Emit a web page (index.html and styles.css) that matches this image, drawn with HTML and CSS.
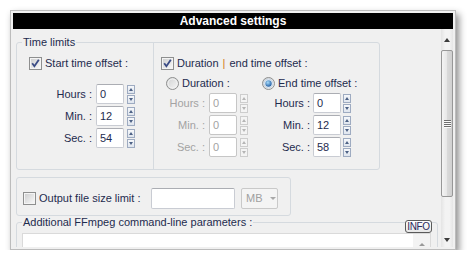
FILE: index.html
```html
<!DOCTYPE html>
<html lang="en">
<head>
    <meta charset="UTF-8">
    <title>Advanced settings</title>
    <link rel="stylesheet" href="styles.css">
</head>
<body>

    <svg class="defs" width="0" height="0">
        <defs>
            <linearGradient id="cbg" x1="0" y1="0" x2="1" y2="1">
                <stop offset="0" stop-color="#cfd0d1"/>
                <stop offset="1" stop-color="#f7f7f7"/>
            </linearGradient>
            <radialGradient id="rdot" cx="0.4" cy="0.35" r="0.7">
                <stop offset="0" stop-color="#a8dcfb"/>
                <stop offset="1" stop-color="#1a58a0"/>
            </radialGradient>
        </defs>
    </svg>

    <div class="window">
        <div class="titlebar">Advanced settings</div>
        <div class="body">
            <div class="main">

                <fieldset class="group time-group">
                    <legend>Time limits</legend>
                    <div class="time-cols">
                        <div class="start-col">
                            <label class="check">
                                <svg class="cb" viewBox="0 0 13 13"><rect x=".5" y=".5" width="12" height="12" fill="#f4f4f4" stroke="#8e8f8f"/><rect x="2" y="2" width="9" height="9" fill="url(#cbg)"/><path d="M3.2 6.3l2.2 3 4.4-6.6" fill="none" stroke="#3a4b85" stroke-width="1.8"/></svg>
                                Start time offset :
                            </label>
                            <div class="fields start-fields">
                                <div class="field"><span class="lbl">Hours :</span><span class="num">0</span><span class="spin"><i class="up"></i><i class="down"></i></span></div>
                                <div class="field"><span class="lbl">Min. :</span><span class="num">12</span><span class="spin"><i class="up"></i><i class="down"></i></span></div>
                                <div class="field"><span class="lbl">Sec. :</span><span class="num">54</span><span class="spin"><i class="up"></i><i class="down"></i></span></div>
                            </div>
                        </div>

                        <div class="end-col">
                            <label class="check">
                                <svg class="cb" viewBox="0 0 13 13"><rect x=".5" y=".5" width="12" height="12" fill="#f4f4f4" stroke="#8e8f8f"/><rect x="2" y="2" width="9" height="9" fill="url(#cbg)"/><path d="M3.2 6.3l2.2 3 4.4-6.6" fill="none" stroke="#3a4b85" stroke-width="1.8"/></svg>
                                Duration <span class="bar">|</span> end time offset :
                            </label>
                            <div class="sub-cols">
                                <div class="sub dur-sub">
                                    <label class="radio">
                                        <svg class="rb" viewBox="0 0 13 13"><circle cx="6.5" cy="6.5" r="6" fill="url(#cbg)" stroke="#8e8f8f"/><circle cx="6.5" cy="6.5" r="4.5" fill="none" stroke="#f2f2f2"/></svg>
                                        Duration :
                                    </label>
                                    <div class="fields">
                                        <div class="field off"><span class="lbl">Hours :</span><span class="num">0</span><span class="spin"><i class="up"></i><i class="down"></i></span></div>
                                        <div class="field off"><span class="lbl">Min. :</span><span class="num">0</span><span class="spin"><i class="up"></i><i class="down"></i></span></div>
                                        <div class="field off"><span class="lbl">Sec. :</span><span class="num">0</span><span class="spin"><i class="up"></i><i class="down"></i></span></div>
                                    </div>
                                </div>
                                <div class="sub offset-sub">
                                    <label class="radio">
                                        <svg class="rb" viewBox="0 0 13 13"><circle cx="6.5" cy="6.5" r="6" fill="url(#cbg)" stroke="#8e8f8f"/><circle cx="6.5" cy="6.5" r="4.5" fill="#eef3f8" stroke="#c4d3e3"/><circle cx="6.5" cy="6.5" r="3.2" fill="url(#rdot)"/></svg>
                                        End time offset :
                                    </label>
                                    <div class="fields">
                                        <div class="field"><span class="lbl">Hours :</span><span class="num">0</span><span class="spin"><i class="up"></i><i class="down"></i></span></div>
                                        <div class="field"><span class="lbl">Min. :</span><span class="num">12</span><span class="spin"><i class="up"></i><i class="down"></i></span></div>
                                        <div class="field"><span class="lbl">Sec. :</span><span class="num">58</span><span class="spin"><i class="up"></i><i class="down"></i></span></div>
                                    </div>
                                </div>
                            </div>
                        </div>
                    </div>
                </fieldset>

                <fieldset class="group size-group">
                    <label class="check size-check">
                        <svg class="cb" viewBox="0 0 13 13"><rect x=".5" y=".5" width="12" height="12" fill="#f4f4f4" stroke="#8e8f8f"/><rect x="2" y="2" width="9" height="9" fill="url(#cbg)"/></svg>
                        Output file size limit :
                    </label>
                    <span class="text-input"></span>
                    <span class="select">MB<i></i></span>
                </fieldset>

                <fieldset class="group params-group">
                    <legend>Additional FFmpeg command-line parameters :</legend>
                    <div class="params">
                        <span class="info-btn">INFO</span>
                        <div class="textarea"><div class="ta-scroll"><i></i></div></div>
                    </div>
                </fieldset>

            </div>
            <div class="scrollbar">
                <div class="sb-btn sb-up"><i></i></div>
                <div class="sb-thumb"><span class="grip"></span></div>
                <div class="sb-track"></div>
                <div class="sb-btn sb-down"><i></i></div>
            </div>
        </div>
    </div>

</body>
</html>
```

FILE: styles.css
```css
* { box-sizing: border-box; }
body { margin: 0; background: #fff; font-family: "Liberation Sans", Arial, sans-serif; font-size: 11px; color: #1e2b4e; }
.defs { position: absolute; }

.window {
    margin: 10px 0 0 10px; width: 446px; height: 240px;
    border: 1px solid #bcbcbc; padding: 2px;
    background: #f0f0f0;
    box-shadow: 3px 4px 7px rgba(0, 0, 0, 0.45);
}
.titlebar { height: 16px; background: #000; color: #fff; font-weight: bold; font-size: 12px; line-height: 16px; text-align: center; }
.body { display: flex; height: 218px; }
.main { width: 428px; overflow: hidden; padding: 7px 0 0 3px; }

/* group boxes */
.group { margin: 0; padding: 0; border: 1px solid #d5dadf; border-radius: 3px; min-width: 0; }
.group legend { padding: 0 1px; margin-left: 5px; line-height: 13px; }

.time-group { width: 364px; }
.time-cols { display: flex; align-items: flex-start; height: 120px; }
.start-col { width: 136px; padding: 8px 0 0 12px; }
.end-col { width: 226px; height: 126px; margin-top: -6px; border-left: 1px solid #d5dadf; padding-top: 14px; }
.end-col > .check { margin-left: 7px; }

.check, .radio { display: flex; align-items: center; gap: 3px; height: 13px; line-height: 13px; white-space: nowrap; }
.cb, .rb { width: 13px; height: 13px; flex: none; }
.bar { color: #d07a22; padding: 0 1px; }

.fields { display: flex; flex-direction: column; gap: 2px; }
.start-fields { margin-top: 14px; }
.field { display: flex; height: 20px; }
.lbl { line-height: 20px; text-align: right; white-space: nowrap; }
.num {
    width: 28px; height: 20px; background: #fff;
    border: 1px solid #c9ccd3; border-top-color: #abadb3; border-radius: 2px;
    padding-left: 3px; line-height: 18px;
}
.spin { display: flex; flex-direction: column; gap: 1px; margin-top: 1px; }
.spin i {
    width: 8px; height: 9px; display: flex; align-items: center; justify-content: center;
    border: 1px solid #9eabc1; background: linear-gradient(#f6f8fb, #dfe5ee);
}
.spin i::after { content: ""; border-left: 2px solid transparent; border-right: 2px solid transparent; }
.spin .up::after { border-bottom: 3px solid #4d6185; }
.spin .down::after { border-top: 3px solid #4d6185; }

.start-col .lbl { width: 63px; margin-right: 4px; }
.start-col .num { margin-right: 3px; }

.off { color: #a3a3a3; }
.off .num { border-color: #c6c6c6; }
.off .spin i { border-color: #cdcdcd; background: #f4f4f4; }
.off .spin .up::after { border-bottom-color: #b5b5b5; }
.off .spin .down::after { border-top-color: #b5b5b5; }

.sub-cols { display: flex; margin-top: 7px; }
.sub .fields { margin-top: 3px; }
.dur-sub { width: 102px; }
.dur-sub .radio { padding-left: 12px; }
.dur-sub .lbl { width: 51px; margin-right: 4px; }
.dur-sub .num { margin-right: 3px; }
.offset-sub .radio { padding-left: 6px; }
.offset-sub .lbl { width: 54px; margin-right: 3px; }
.offset-sub .num { margin-right: 2px; }

/* output size */
.size-group { width: 275px; height: 39px; margin-top: 7px; display: flex; align-items: center; padding: 3px 0 0 6px; }
.size-check { width: 128px; }
.text-input { width: 84px; height: 21px; background: #fff; border: 1px solid #c9ccd3; border-top-color: #abadb3; border-radius: 2px; }
.select {
    width: 37px; height: 21px; margin-left: 6px; display: flex; align-items: center; gap: 7px;
    padding-left: 4px; color: #a0a0a0; border: 1px solid #c9c9c9; border-radius: 2px; background: #f4f4f4;
}
.select i { border-left: 3px solid transparent; border-right: 3px solid transparent; border-top: 3px solid #a8a8a8; }

/* ffmpeg params */
.params-group { width: 422px; }
.params { position: relative; padding: 4px 0 0 5px; }
.info-btn {
    position: absolute; top: -9px; right: 5px;
    width: 27px; height: 13px; border: 1px solid #5a5a5a; border-radius: 3px;
    background: linear-gradient(#ffffff, #e6e6e6);
    font-size: 10px; line-height: 11px; letter-spacing: -0.4px; text-align: center; color: #2a2a5c;
}
.textarea { width: 409px; height: 40px; background: #fff; border: 1px solid #dadada; display: flex; justify-content: flex-end; }
.ta-scroll { width: 17px; background: #f3f3f3; display: flex; justify-content: center; padding-top: 9px; }
.ta-scroll i { width: 0; height: 0; border-left: 3px solid transparent; border-right: 3px solid transparent; border-bottom: 3px solid #9a9a9a; }

/* main scrollbar */
.scrollbar { width: 12px; display: flex; flex-direction: column; background: linear-gradient(to right, #e4e4e4, #f3f3f3 35%, #f3f3f3 70%, #e6e6e6); }
.sb-btn { display: flex; justify-content: center; align-items: center; }
.sb-btn i { width: 0; height: 0; border-left: 3px solid transparent; border-right: 3px solid transparent; }
.sb-up { height: 21px; }
.sb-up i { border-bottom: 4px solid #3c3c3c; }
.sb-thumb {
    height: 147px; border: 1px solid #979797; border-radius: 2px;
    background: linear-gradient(to right, #f4f4f4, #e8e8e8 45%, #d9d9d9 55%, #d0d0d0);
    display: flex; align-items: center; justify-content: center;
}
.grip { width: 7px; height: 8px; background: repeating-linear-gradient(to bottom, #6f6f6f 0 1px, #fbfbfb 1px 2px); }
.sb-track { flex: 1; }
.sb-down { height: 14px; }
.sb-down i { border-top: 4px solid #3c3c3c; }
```
